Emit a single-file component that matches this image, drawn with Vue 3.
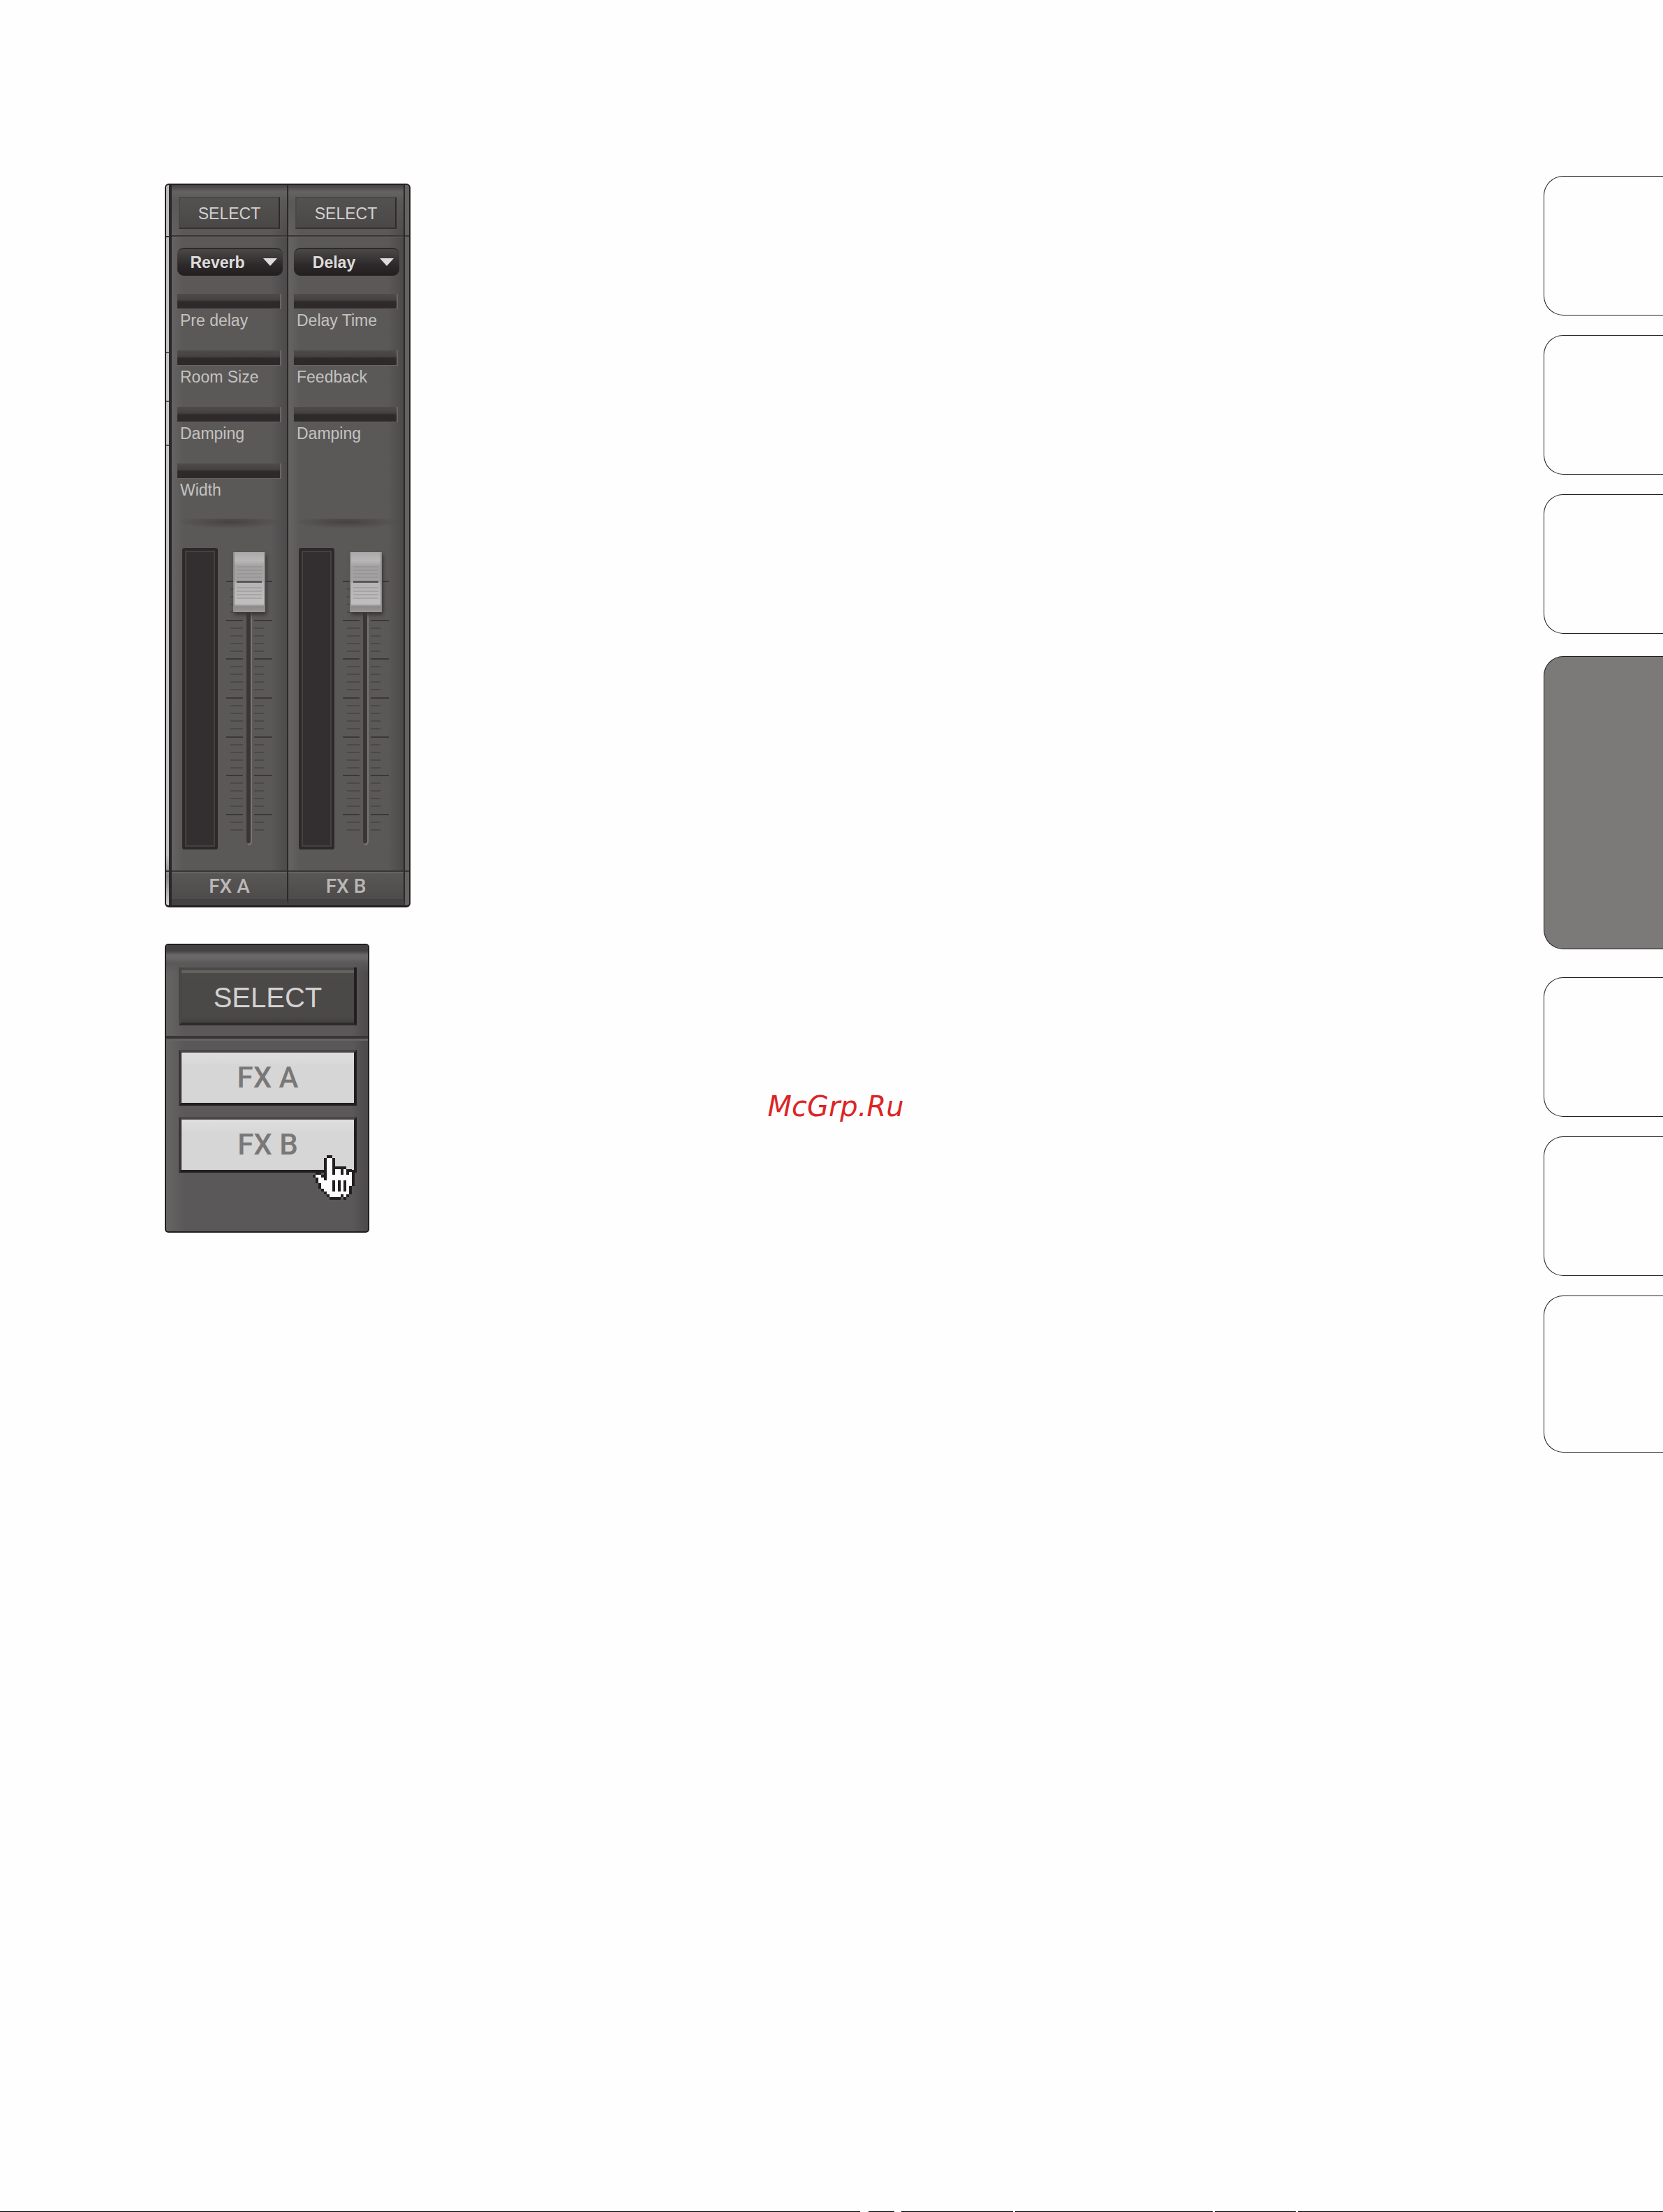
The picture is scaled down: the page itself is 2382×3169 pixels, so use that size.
<script setup>
import { reactive } from 'vue'

const channels = reactive([
  { id: 'a', name: 'FX A', effect: 'Reverb', level: 100, params: ['Pre delay', 'Room Size', 'Damping', 'Width'] },
  { id: 'b', name: 'FX B', effect: 'Delay', level: 100, params: ['Delay Time', 'Feedback', 'Damping'] }
])
const effects = ['Reverb', 'Delay']
const tabs = [1, 2, 3, 4, 5, 6, 7]
const activeTab = 4

// Scale marks beside the fader, y in pixels from the top of the meter
const major = [47, 103, 158, 214, 270, 325, 381]
const minor = major
  .flatMap((y, i) => [11, 22, 33, 44].slice(0, i === 6 ? 2 : 4).map((d) => y + d))

// Hand pointer bitmap: X outline, . fill
const hand = [
  '     XX        ',
  '    X..X       ',
  '    X..X       ',
  '    X..X       ',
  '    X..XXXXX   ',
  '    X..X..X.XX ',
  ' XX X..X..X.X.X',
  'X..XX.........X',
  ' X..X.........X',
  ' X.....X.X.X..X',
  '  X....X.X.X..X',
  '  X....X.X.X.X ',
  '   X...X.X.X.X ',
  '    X........X ',
  '     X....X.X  ',
  '      XXXX X   '
]
const handCells = hand.flatMap((row, y) =>
  [...row].map((c, x) => ({ x, y, c })).filter((p) => p.c !== ' ')
)
</script>

<template>
  <div class="page">
    <div class="content">
      <main class="figures">
        <section class="mixer">
          <div class="strip"></div>
          <div v-for="ch in channels" :key="ch.id" class="channel">
            <div class="head">
              <button class="select-btn" type="button">SELECT</button>
            </div>
            <div class="body">
              <div class="effect">
                <select v-model="ch.effect" :aria-label="ch.name + ' effect'">
                  <option v-for="e in effects" :key="e">{{ e }}</option>
                </select>
                <svg class="caret" viewBox="0 0 20 11"><path d="M0 0h20L10 11z" fill="#dddbdb" /></svg>
              </div>
              <div class="params">
                <div v-for="(p, i) in ch.params" :key="p" class="param">
                  <input :id="ch.id + i" class="bar" type="range" value="0" />
                  <label :for="ch.id + i">{{ p }}</label>
                </div>
              </div>
              <div class="groove"></div>
              <div class="levels">
                <div class="meter"></div>
                <div class="fader">
                  <svg class="scale" viewBox="0 0 74 432">
                    <g stroke="#3c3839" stroke-width="2">
                      <path v-for="y in major" :key="y" :d="`M4 ${y + 1}h24M44 ${y + 1}h26`" />
                    </g>
                    <g stroke="#4b4847" stroke-width="2">
                      <path v-for="y in minor" :key="y" :d="`M10 ${y + 1}h18M44 ${y + 1}h14`" />
                    </g>
                    <rect x="33" y="50" width="6" height="373" rx="3" fill="#3a3637" />
                    <path d="M40 90v330q0 5 -5 5" fill="none" stroke="#777575" stroke-width="2" />
                  </svg>
                  <input v-model="ch.level" class="slide" type="range" :aria-label="ch.name + ' level'" />
                </div>
              </div>
            </div>
            <div class="name">{{ ch.name }}</div>
          </div>
          <div class="rest"></div>
        </section>

        <section class="chooser">
          <div class="chooser-head">
            <button class="big-select" type="button">SELECT</button>
          </div>
          <div class="options">
            <button v-for="ch in channels" :key="ch.id" class="option" type="button">{{ ch.name }}</button>
          </div>
          <svg class="hand" viewBox="0 0 15 16" shape-rendering="crispEdges">
            <rect
              v-for="p in handCells"
              :key="p.x + '-' + p.y"
              :x="p.x"
              :y="p.y"
              width="1"
              height="1"
              :fill="p.c === 'X' ? '#231f20' : '#fdfdfd'"
            />
          </svg>
        </section>
      </main>

      <nav class="tabs">
        <a
          v-for="t in tabs"
          :key="t"
          href="#"
          class="tab"
          :class="{ active: t === activeTab, last: t === tabs.length }"
          :aria-label="'Chapter ' + t"
        ></a>
      </nav>
    </div>
    <div class="mark">McGrp.Ru</div>
    <div class="edge"></div>
  </div>
</template>

<style>
body {
  background: #fefefe;
}
</style>

<style scoped>
* {
  box-sizing: border-box;
}
button,
select,
input {
  margin: 0;
  padding: 0;
  border: 0;
  border-radius: 0;
  appearance: none;
  font-family: "Liberation Sans", Arial, sans-serif;
}
.page {
  position: relative;
  display: flex;
  flex-direction: column;
  min-height: 100vh;
  font-family: "Liberation Sans", Arial, sans-serif;
}
.content {
  flex: 1;
  display: flex;
  justify-content: space-between;
  align-items: flex-start;
  padding: 252px 0 0 236px;
}
.figures {
  display: flex;
  flex-direction: column;
  align-items: flex-start;
  gap: 52px;
  padding-top: 11px;
}

/* Mixer */
.mixer {
  display: flex;
  border: 2px solid #231f20;
  border-bottom-width: 3px;
  border-radius: 6px;
  overflow: hidden;
  background: #595756;
}
.strip {
  width: 8px;
  border-right: 4px solid #2b2829;
  background:
    linear-gradient(#333 0 0) 0 73px / 100% 2px no-repeat,
    linear-gradient(#555 0 0) 0 239px / 100% 2px no-repeat,
    linear-gradient(#555 0 0) 0 309px / 100% 2px no-repeat,
    linear-gradient(#555 0 0) 0 372px / 100% 2px no-repeat,
    linear-gradient(#333 0 0) 0 982px / 100% 2px no-repeat,
    linear-gradient(#bdbbbb, #c9c9c9 30%, #c4c4c4 93%, #888 96%, #d5d5d5);
}
.channel {
  display: flex;
  flex-direction: column;
  width: 167px;
  border-right: 2px solid #2b2829;
  border-bottom: 9px solid #444142;
  background: linear-gradient(90deg, #666463, #5b5958 10%, #5b5958 86%, #4c4a4a);
}
.head {
  height: 74px;
  padding: 17px 10px 0;
  border-bottom: 2px solid #393536;
  background: linear-gradient(#444142, #656362 10px, #5b5958 24px, transparent);
}
.select-btn {
  display: block;
  width: 100%;
  height: 46px;
  border-top: 2px solid #4a4747;
  border-left: 2px solid #4a4747;
  border-right: 2px solid #2e2a2b;
  border-bottom: 2px solid #363233;
  background: linear-gradient(#545251, #4a4747);
  color: #d3d1d1;
  font-size: 23px;
  line-height: 44px;
}
.body {
  padding: 15px 6px 30px 8px;
  border-top: 1px solid #6b6968;
}
.effect {
  position: relative;
  height: 40px;
}
.effect select {
  width: 100%;
  height: 40px;
  padding-right: 36px;
  border-radius: 9px;
  border-top: 2px solid #2e2a2b;
  background: linear-gradient(#4b4848, #2d292a 60%, #231f20);
  color: #dddbdb;
  font-size: 23px;
  font-weight: bold;
  text-align: center;
  text-align-last: center;
}
.caret {
  position: absolute;
  top: 15px;
  right: 8px;
  width: 20px;
  height: 11px;
  pointer-events: none;
}
.params {
  display: flex;
  flex-direction: column;
  gap: 30px;
  min-height: 348px;
  padding-top: 26px;
}
.bar {
  display: block;
  width: 149px;
  height: 22px;
  border-right: 2px solid #686665;
  border-bottom: 1px solid #686665;
  background: linear-gradient(#4e4b4a, #454242 40%, #2e2a2b 55%, #2e2a2b);
}
.bar::-webkit-slider-thumb {
  appearance: none;
  width: 1px;
  height: 1px;
  background: transparent;
}
.param label {
  display: block;
  padding: 3px 0 0 4px;
  color: #c4c2c1;
  font-size: 23px;
  line-height: 26px;
}
.groove {
  height: 16px;
  background: radial-gradient(ellipse 50% 60% at 50% 30%, #454241, transparent);
}
.levels {
  display: flex;
  gap: 8px;
  margin-top: 26px;
  padding-left: 7px;
}
.meter {
  width: 51px;
  height: 432px;
  border: 5px solid #2d292a;
  border-radius: 3px;
  outline: 2px solid #454142;
  outline-offset: -6px;
  background: #332f30;
}
.fader {
  position: relative;
  width: 74px;
  height: 432px;
}
.scale {
  display: block;
  width: 74px;
  height: 432px;
}
.slide {
  position: absolute;
  top: 6px;
  left: 14px;
  width: 46px;
  height: 420px;
  background: transparent;
  writing-mode: vertical-lr;
  direction: rtl;
}
.slide::-webkit-slider-thumb {
  appearance: none;
  width: 46px;
  height: 86px;
  border-left: 2px solid #8f8d8d;
  border-right: 2px solid #8f8d8d;
  box-shadow: 2px 4px 5px #3a3637;
  background:
    linear-gradient(#5a5858 0 0) 50% 41px / 36px 3px no-repeat,
    repeating-linear-gradient(#8886 0 2px, transparent 2px 5px) 50% 20px / 36px 20px no-repeat,
    repeating-linear-gradient(#8886 0 2px, transparent 2px 5px) 50% 50px / 36px 20px no-repeat,
    linear-gradient(#aaa8a8, #b9b7b7 12px, #a3a1a1 20px, #a3a1a1 42px, #b5b3b3 44px, #c0bebe 74px, #8a8888 78px, #999797);
}
.name {
  height: 41px;
  border-top: 2px solid #393536;
  background: linear-gradient(#666463 0 2px, #595756 2px, #4e4b4b);
  color: #bab8b7;
  font-family: Roboto, sans-serif;
  font-size: 28px;
  font-weight: 500;
  line-height: 42px;
  text-align: center;
}
.rest {
  width: 6px;
  background:
    linear-gradient(#393536 0 0) 0 72px / 100% 2px no-repeat,
    linear-gradient(#393536 0 0) 0 982px / 100% 2px no-repeat,
    #656362;
}

/* Channel chooser */
.chooser {
  position: relative;
  width: 293px;
  height: 414px;
  border: 2px solid #231f20;
  border-radius: 5px;
  overflow: hidden;
  background: linear-gradient(90deg, #676564, #5a5858 9%, #5a5858 92%, #4b4949);
}
.chooser-head {
  height: 134px;
  padding: 32px 16px 0 18px;
  border-bottom: 4px solid #393536;
  background: linear-gradient(#444142 8px, #696767 14px, #696767 18px, #5a5858 26px, transparent 40px);
}
.big-select {
  display: block;
  width: 100%;
  height: 83px;
  border-left: 4px solid #484545;
  border-right: 4px solid #231f20;
  border-bottom: 4px solid #2e2a2b;
  background: linear-gradient(#4b4948 0 4px, #646261 4px 8px, #4c4a49 8px 14px, #4b4848 20px, #4b4848 70px, #434040);
  color: #d3d1d1;
  font-size: 40px;
  line-height: 86px;
}
.options {
  display: flex;
  flex-direction: column;
  gap: 16px;
  padding: 13px 16px 0 18px;
  border-top: 3px solid #666463;
}
.option {
  height: 80px;
  border: 4px solid #231f20;
  border-top-color: #4a4546;
  border-left-color: #393536;
  background: linear-gradient(#dfdfdf, #d6d6d6 20px);
  color: #7a7777;
  font-family: Roboto, sans-serif;
  font-size: 42px;
  font-weight: 500;
  line-height: 72px;
}
.hand {
  position: absolute;
  right: 19px;
  bottom: 45px;
  width: 60px;
  height: 64px;
}

/* Chapter tabs */
.tabs {
  display: flex;
  flex-direction: column;
  gap: 28px;
  width: 171px;
}
.tab {
  height: 200px;
  border: 1px solid #231f20;
  border-right: 0;
  border-radius: 28px 0 0 28px;
}
.tab.active {
  height: 420px;
  margin: 4px 0 12px;
  background: #7c7979;
}
.tab.last {
  height: 225px;
}

.mark {
  position: absolute;
  top: 50%;
  left: 0;
  right: 0;
  margin-top: -24px;
  padding-left: 12px;
  color: #dd2525;
  font-family: "DejaVu Sans", sans-serif;
  font-size: 40px;
  font-style: oblique;
  line-height: 48px;
  text-align: center;
  pointer-events: none;
}
.edge {
  height: 1px;
  background:
    linear-gradient(#fefefe 0 0) 52% 0 / 12px 1px no-repeat,
    linear-gradient(#fefefe 0 0) 54% 0 / 10px 1px no-repeat,
    linear-gradient(#fefefe 0 0) 61% 0 / 3px 1px no-repeat,
    linear-gradient(#fefefe 0 0) 73% 0 / 3px 1px no-repeat,
    linear-gradient(#fefefe 0 0) 78% 0 / 3px 1px no-repeat,
    #000;
}
</style>
